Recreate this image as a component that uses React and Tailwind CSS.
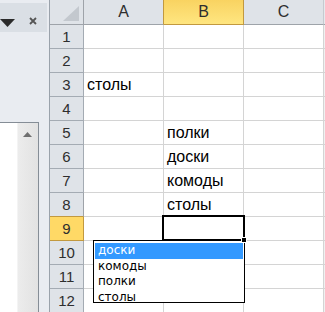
import React from "react";

const data = {
  3: { A: "столы" },
  5: { B: "полки" },
  6: { B: "доски" },
  7: { B: "комоды" },
  8: { B: "столы" },
};

function LeftPanel() {
  return (
    <div className="w-[50px] h-full shrink-0 bg-[#e9ecf1] border-r border-[#9aa2ab] flex flex-col">
      <div className="h-[3px]" />
      <div className="h-[29px] w-[47px] bg-[#dadfe5] relative">
        <svg className="absolute left-0 top-[16px]" width="16" height="9" viewBox="0 0 16 9">
          <polygon points="0,0 15,0 7.5,8" fill="#2b2b2b" />
        </svg>
        <svg className="absolute left-[29px] top-[14px]" width="8" height="8" viewBox="0 0 8 8">
          <path d="M1 1 L7 7 M7 1 L1 7" stroke="#555" strokeWidth="1.8" />
        </svg>
      </div>
      <div className="h-[90px]" />
      <div className="w-[39px] flex-1 border-t border-r border-[#858d96] flex">
        <div className="w-[17px] bg-white" />
        <div className="w-[21px] bg-gradient-to-r from-[#ececec] to-[#e2e2e2] border-l border-[#f4f4f4] relative">
          <svg className="absolute left-[5px] top-[9px]" width="9" height="5" viewBox="0 0 9 5">
            <polygon points="0,5 9,5 4.5,0" fill="#6f6f6f" />
          </svg>
        </div>
      </div>
    </div>
  );
}

export default function App() {
  const rows = Array.from({ length: 12 }, (_, i) => i + 1);
  const cols = ["A", "B", "C"];
  return (
    <div className="w-[325px] h-[312px] overflow-hidden flex relative bg-white font-['Liberation_Sans',sans-serif]">
      <LeftPanel />
      <div className="flex-1 grid grid-cols-[34px_80px_80px_80px_1fr] grid-rows-[25px_repeat(12,24px)]">
        {/* corner */}
        <div className="bg-[#dfe3e8] border-r border-b border-[#9ea3a9] relative">
          <svg className="absolute left-[13px] top-[6px]" width="17" height="16" viewBox="0 0 17 16">
            <polygon points="0,15 16,0 16,15" fill="#c3c8ce" />
          </svg>
        </div>
        {cols.map((c) => (
          <div
            key={c}
            className={
              c === "B"
                ? "bg-gradient-to-b from-[#f9d361] to-[#ffe680] border-r border-b border-[#c2993f] flex items-center justify-center text-[16px] text-[#2e2e2e]"
                : c === "A"
                ? "bg-[#dfe3e8] border-r border-b border-r-[#c2993f] border-b-[#9ea3a9] flex items-center justify-center text-[16px] text-[#2e2e2e]"
                : "bg-[#dfe3e8] border-r border-b border-r-[#c6cacf] border-b-[#9ea3a9] flex items-center justify-center text-[16px] text-[#2e2e2e]"
            }
          >
            {c}
          </div>
        ))}
        <div className="bg-[#e6e9ed] border-b border-[#9ea3a9]" />
        {rows.map((r) => (
          <React.Fragment key={r}>
            <div
              className={
                r === 9
                  ? "bg-[#ffd966] border-r border-b border-[#c2993f] flex items-center justify-center text-[15px] text-[#2e2e2e] pt-[1px]"
                  : r === 8
                  ? "bg-[#dfe3e8] border-r border-b border-r-[#9ea3a9] border-b-[#c2993f] flex items-center justify-center text-[15px] text-[#2e2e2e] pt-[1px]"
                  : "bg-[#dfe3e8] border-r border-b border-[#a4abb3] flex items-center justify-center text-[15px] text-[#2e2e2e] pt-[1px]"
              }
            >
              {r}
            </div>
            {cols.map((c) => (
              <div
                key={c}
                className="border-r border-b border-[#d4d4d4] flex items-end pl-[3px] pb-[2px] text-[16px] leading-[18px] text-black whitespace-nowrap"
              >
                {data[r] && data[r][c]}
              </div>
            ))}
            <div className="border-b border-[#d4d4d4] bg-[#f0f0f0]" />
          </React.Fragment>
        ))}
      </div>

      {/* active cell */}
      <div className="absolute left-[162px] top-[215px] w-[83px] h-[26px] border-2 border-black" />

      {/* dropdown list */}
      <div className="absolute left-[93px] top-[240px] w-[152px] h-[63px] border border-black bg-white pt-[2px] px-[1px] font-['DejaVu_Sans',sans-serif] text-[12px]">
        <div className="h-[15.5px] leading-[15.5px] bg-[#3399ff] text-white pl-[3px]">доски</div>
        <div className="h-[15.5px] leading-[15.5px] text-black pl-[3px]">комоды</div>
        <div className="h-[15.5px] leading-[15.5px] text-black pl-[3px]">полки</div>
        <div className="h-[15.5px] leading-[15.5px] text-black pl-[3px]">столы</div>
      </div>

      {/* fill handle */}
      <div className="absolute left-[241px] top-[237px] w-[6px] h-[6px] bg-black border border-white" />
    </div>
  );
}
